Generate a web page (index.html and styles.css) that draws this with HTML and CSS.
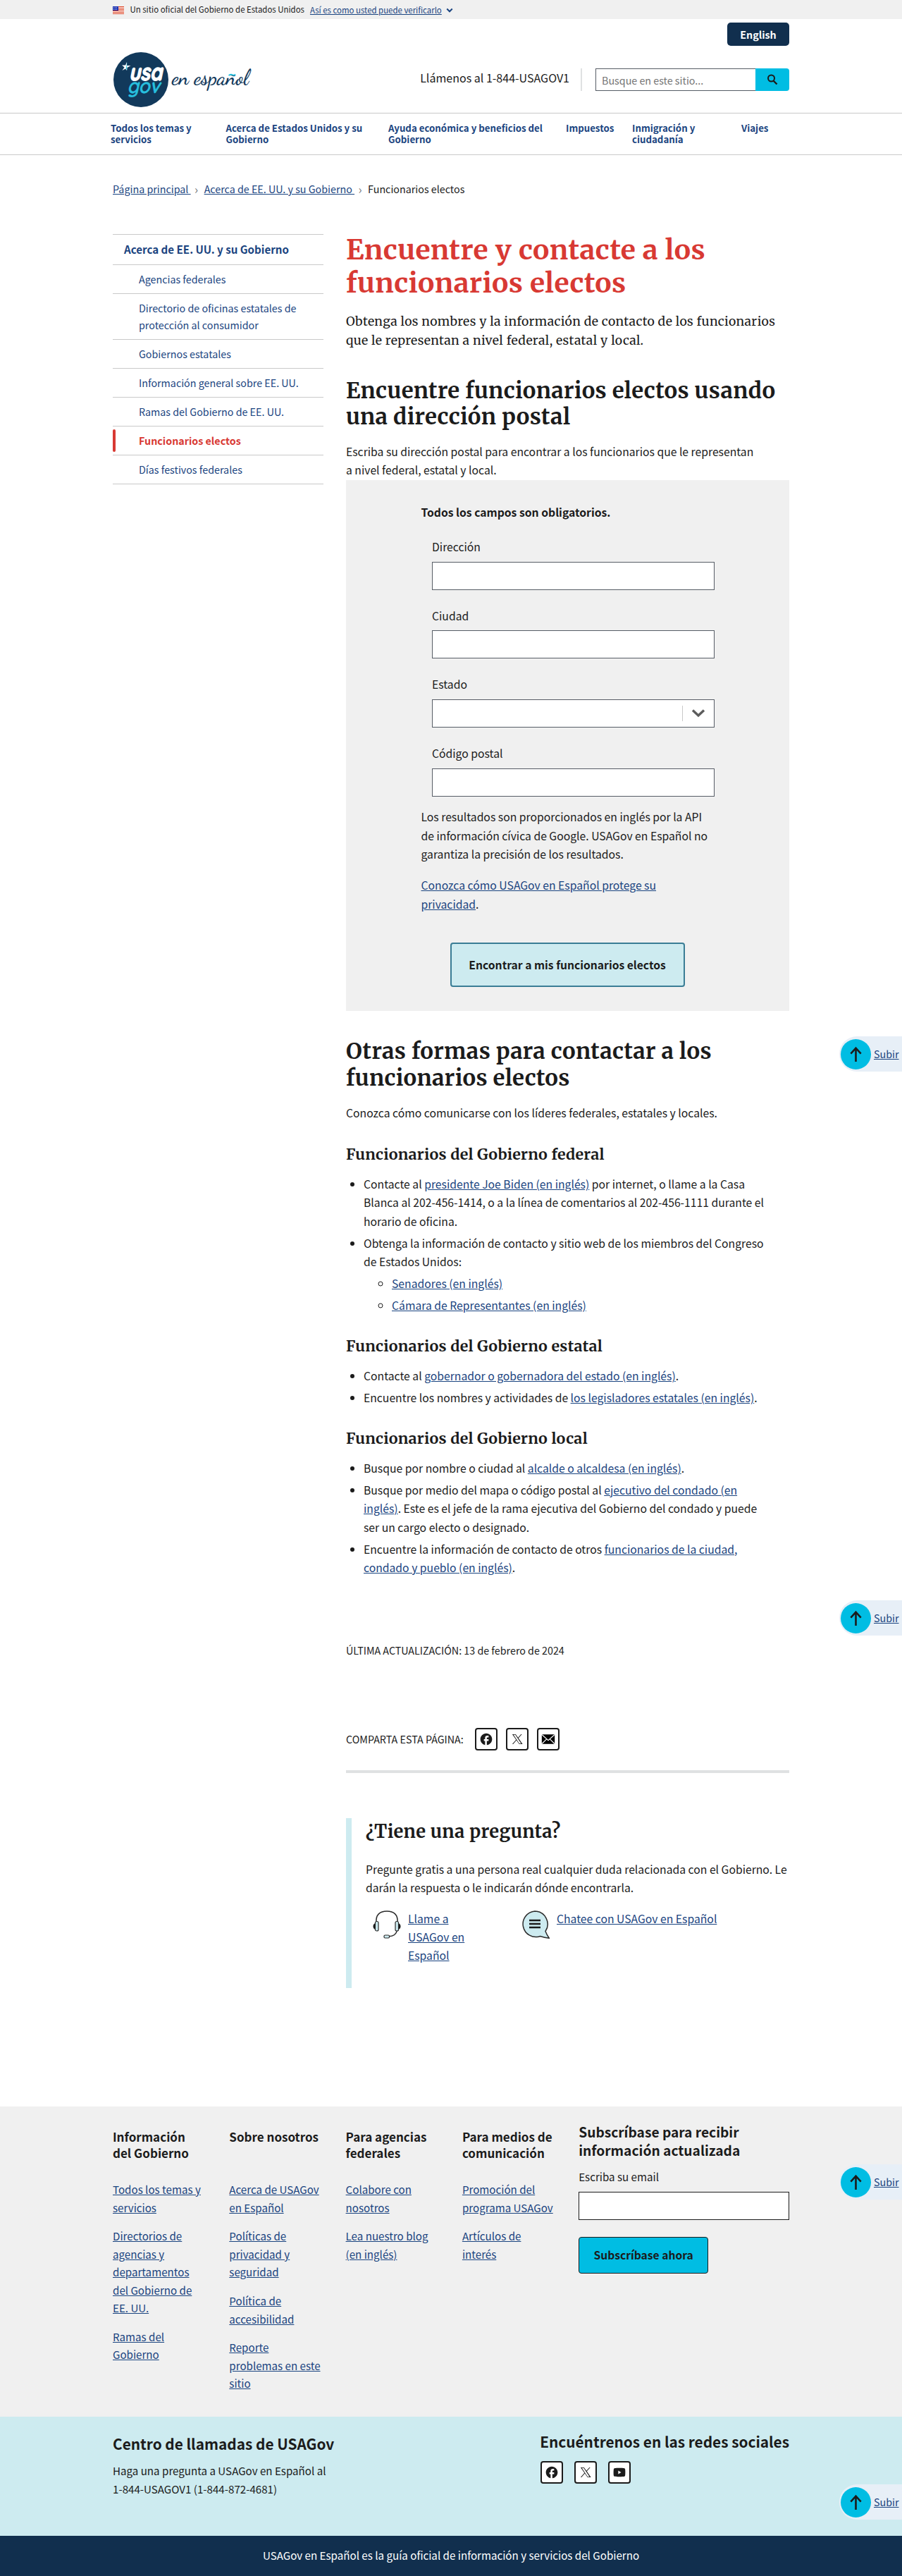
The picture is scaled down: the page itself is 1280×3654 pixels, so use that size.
FILE: index.html
```html
<!DOCTYPE html>
<html lang="es">
<head>
<meta charset="utf-8">
<title>Encuentre y contacte a los funcionarios electos | USAGov en Español</title>
<link rel="stylesheet" href="styles.css">
</head>
<body>
<svg width="0" height="0" class="sprite" aria-hidden="true">
  <symbol id="facebook" viewBox="0 0 24 24"><path fill="currentColor" d="M22 12c0-5.520-4.480-10-10-10S2 6.480 2 12c0 4.840 3.440 8.870 8 9.800V15H8v-3h2V9.500C10 7.570 11.570 6 13.500 6H16v3h-2c-.55 0-1 .45-1 1v2h3v3h-3v6.950c5.050-.5 9-4.760 9-9.950z"/></symbol>
  <symbol id="x" viewBox="0 0 24 24"><path fill="currentColor" fill-rule="evenodd" d="M3.500 3.500h5.800l4.100 5.800 5.100-5.800h1.500l-5.900 6.800 7 10.200h-5.800l-4.600-6.600-5.700 6.600H3.500l6.500-7.600zM5.600 4.600l10 14.800h3.100L8.700 4.600z"/></symbol>
  <symbol id="mail" viewBox="0 0 24 24"><rect x="1" y="4" width="22" height="16" rx="1.500" fill="#000"/><path d="M1.500 4.500L12 14l10.500-9.500M1.500 19.500l8-8M22.500 19.500l-8-8" fill="none" stroke="#fff" stroke-width="1.300"/></symbol>
  <symbol id="youtube" viewBox="0 0 24 24"><path fill="currentColor" fill-rule="evenodd" d="M12 4.500c8 0 9 .3 9.600 1.700.6 1.600.6 10 0 11.600-.6 1.400-1.600 1.700-9.600 1.700s-9-.3-9.600-1.700c-.6-1.600-.6-10 0-11.600C3 4.800 4 4.500 12 4.500zM10 9v6l5-3z"/></symbol>
  <symbol id="up" viewBox="0 0 24 24"><path d="M12 23V3M4.500 11L12 2.800 19.500 11" fill="none" stroke="#1b1b1b" stroke-width="2.700"/></symbol>
</svg>

<div class="banner"><div class="wrap">
  <svg class="flag" viewBox="0 0 16 11"><path fill="#fff" d="M0 0h16v11H0z"/><path stroke="#db3e1f" d="M0 .5h16M0 2.500h16M0 4.500h16M0 6.500h16M0 8.500h16M0 10.500h16"/><path fill="#1e33b1" d="M0 0h8v6H0z"/><path stroke="#fff" stroke-width=".7" stroke-dasharray=".8 1.200" d="M1 1.500h6M1 3h6M1 4.500h6"/></svg>
  <span>Un sitio oficial del Gobierno de Estados Unidos</span>
  <a href="#">Así es como usted puede verificarlo</a>
  <svg class="chev" viewBox="0 0 8 8"><path d="M1 2l3 3 3-3" fill="none" stroke="#1a4480" stroke-width="1.600"/></svg>
</div></div>

<header class="header wrap">
  <a class="lang" href="#">English</a>
  <div class="brand">
    <svg class="logo" viewBox="0 0 210 79">
      <circle cx="40" cy="39" r="39" fill="#12395b"/>
      <text class="logo-usa" x="23" y="40" textLength="47" lengthAdjust="spacingAndGlyphs">usa</text>
      <text class="logo-gov" x="20.500" y="58" textLength="46.500" lengthAdjust="spacingAndGlyphs">gov</text>
      <path fill="#fff" d="M13 18.500h5l2-4.500v5h5.500l-5 3-.5 4-2-2.500-4.500 2.500 3-4.500z"/><path fill="#27c0df" d="M20.200 13.500v12l-1.500-2.500 1-5z"/>
      <text class="logo-es" x="84" y="45.500" textLength="109" lengthAdjust="spacingAndGlyphs">en español</text>
      <path d="M164.500 33q3-2 5.500-.8t4-.8" fill="none" stroke="#27c0df" stroke-width="1.800"/>
    </svg>
    <div class="contact">
      <span class="phone">Llámenos al 1-844-USAGOV1</span>
      <form class="search"><input type="text" placeholder="Busque en este sitio..." aria-label="Buscar"><button type="button" aria-label="Buscar"><svg viewBox="0 0 16 16"><circle cx="6.500" cy="6" r="4.500" fill="none" stroke="#1b1b1b" stroke-width="2"/><path d="M9.500 9.500l5 5" stroke="#1b1b1b" stroke-width="2.400"/></svg></button></form>
    </div>
  </div>
</header>

<nav class="nav"><ul>
  <li>Todos los temas y servicios</li><li>Acerca de Estados Unidos y su Gobierno</li><li>Ayuda económica y beneficios del Gobierno</li><li>Impuestos</li><li>Inmigración y ciudadanía</li><li>Viajes</li>
</ul></nav>

<div class="wrap crumbs"><a href="#">Página principal&nbsp;</a><i>›</i><a href="#">Acerca de EE. UU. y su Gobierno&nbsp;</a><i>›</i><span>Funcionarios electos</span></div>

<div class="wrap layout">
  <aside class="side">
    <a class="side-head" href="#">Acerca de EE. UU. y su Gobierno</a>
    <a href="#">Agencias federales</a>
    <a href="#">Directorio de oficinas estatales de protección al consumidor</a>
    <a href="#">Gobiernos estatales</a>
    <a href="#">Información general sobre EE. UU.</a>
    <a href="#">Ramas del Gobierno de EE. UU.</a>
    <a class="current" href="#">Funcionarios electos</a>
    <a href="#">Días festivos federales</a>
  </aside>
  <main>
    <h1>Encuentre y contacte a los funcionarios electos</h1>
    <p class="intro">Obtenga los nombres y la información de contacto de los funcionarios que le representan a nivel federal, estatal y local.</p>
    <h2>Encuentre funcionarios electos usando una dirección postal</h2>
    <p class="lead">Escriba su dirección postal para encontrar a los funcionarios que le representan a nivel federal, estatal y local.</p>
    <form class="finder">
      <p class="required">Todos los campos son obligatorios.</p>
      <div class="field"><label>Dirección</label><input type="text"></div>
      <div class="field"><label>Ciudad</label><input type="text"></div>
      <div class="field"><label>Estado</label><div class="combo"><svg viewBox="0 0 20 12"><path d="M2 1.500L10 9l8-7.500" fill="none" stroke="#5c5c5c" stroke-width="3.400"/></svg></div></div>
      <div class="field"><label>Código postal</label><input type="text"></div>
      <p class="note">Los resultados son proporcionados en inglés por la API de información cívica de Google. USAGov en Español no garantiza la precisión de los resultados.</p>
      <p class="privacy"><a href="#">Conozca cómo USAGov en Español protege su privacidad</a>.</p>
      <button type="button" class="find">Encontrar a mis funcionarios electos</button>
    </form>
    <h2 class="others">Otras formas para contactar a los funcionarios electos</h2>
    <p class="others-lead">Conozca cómo comunicarse con los líderes federales, estatales y locales.</p>
    <h3 class="first">Funcionarios del Gobierno federal</h3>
    <ul class="list">
      <li>Contacte al <a href="#">presidente Joe Biden (en inglés)</a> por internet, o llame a la Casa Blanca al 202-456-1414, o a la línea de comentarios al 202-456-1111 durante el horario de oficina.</li>
      <li>Obtenga la información de contacto y sitio web de los miembros del Congreso de Estados Unidos:
        <ul><li><a href="#">Senadores (en inglés)</a></li><li><a href="#">Cámara de Representantes (en inglés)</a></li></ul></li>
    </ul>
    <h3>Funcionarios del Gobierno estatal</h3>
    <ul class="list">
      <li>Contacte al <a href="#">gobernador o gobernadora del estado (en inglés)</a>.</li>
      <li>Encuentre los nombres y actividades de <a href="#">los legisladores estatales (en inglés)</a>.</li>
    </ul>
    <h3>Funcionarios del Gobierno local</h3>
    <ul class="list">
      <li>Busque por nombre o ciudad al <a href="#">alcalde o alcaldesa (en inglés)</a>.</li>
      <li>Busque por medio del mapa o código postal al <a href="#">ejecutivo del condado (en inglés)</a>. Este es el jefe de la rama ejecutiva del Gobierno del condado y puede ser un cargo electo o designado.</li>
      <li>Encuentre la información de contacto de otros <a href="#">funcionarios de la ciudad, condado y pueblo (en inglés)</a>.</li>
    </ul>
    <p class="updated">ÚLTIMA ACTUALIZACIÓN: 13 de febrero de 2024</p>
    <div class="share"><span>COMPARTA ESTA PÁGINA:</span>
      <a class="social" href="#"><svg><use href="#facebook"/></svg></a><a class="social" href="#"><svg><use href="#x"/></svg></a><a class="social" href="#"><svg><use href="#mail"/></svg></a>
    </div>
    <section class="ask">
      <h2>¿Tiene una pregunta?</h2>
      <p>Pregunte gratis a una persona real cualquier duda relacionada con el Gobierno. Le darán la respuesta o le indicarán dónde encontrarla.</p>
      <div class="ways">
        <svg viewBox="0 0 40 40"><path d="M5 17C4 6 10 1 20 1s16 5 15 16M34.500 28c-1 6-6 8.500-12 8.800" fill="none" stroke="#2b2b2b" stroke-width="1.500"/><path d="M3.500 18C-.5 19-.5 26 3.500 27zM36.500 18c4 1 4 8 0 9z" fill="#1b1b1b"/><g fill="#cdebf0" stroke="#2b2b2b" stroke-width="1.200"><rect x="3.500" y="15.500" width="4.500" height="13.500" rx="2"/><rect x="32" y="15.500" width="4.500" height="13.500" rx="2"/><rect x="16" y="35" width="7.500" height="4" rx="1.500"/></g></svg>
        <a href="#">Llame a USAGov en Español</a>
        <svg viewBox="0 0 40 40"><path d="M19 1a18.300 18.300 0 1 0 7.500 35.500Q33 38.500 39.300 39.200 36 34.500 34 29.500A18.300 18.300 0 0 0 19 1z" fill="#cdebf0" stroke="#2b2b2b" stroke-width="1.500"/><path d="M11 14h16M11 19h16M11 24h16" stroke="#1b1b1b" stroke-width="2.400"/></svg>
        <a href="#">Chatee con USAGov en Español</a>
      </div>
    </section>
  </main>
</div>

<footer>
  <div class="foot"><div class="wrap foot-grid">
    <section><h3>Información del&nbsp;Gobierno</h3><a href="#">Todos los temas y servicios</a><a href="#">Directorios de agencias y departamentos del Gobierno de EE. UU.</a><a href="#">Ramas del Gobierno</a></section>
    <section><h3>Sobre nosotros</h3><a href="#">Acerca de USAGov en Español</a><a href="#">Políticas de privacidad y seguridad</a><a href="#">Política de accesibilidad</a><a href="#">Reporte problemas en este sitio</a></section>
    <section><h3>Para agencias federales</h3><a href="#">Colabore con nosotros</a><a href="#">Lea nuestro blog (en inglés)</a></section>
    <section><h3>Para medios de comunicación</h3><a href="#">Promoción del programa USAGov</a><a href="#">Artículos de interés</a></section>
    <form class="signup"><h3>Subscríbase para recibir información actualizada</h3><label>Escriba su email</label><input type="text"><button type="button">Subscríbase ahora</button></form>
  </div></div>
  <div class="center"><div class="wrap center-row">
    <div class="call"><h3>Centro de llamadas de USAGov</h3><p>Haga una pregunta a USAGov en Español al<br>1-844-USAGOV1 (1-844-872-4681)</p></div>
    <div class="follow"><h3>Encuéntrenos en las redes sociales</h3><div class="socials"><a class="social" href="#"><svg><use href="#facebook"/></svg></a><a class="social" href="#"><svg><use href="#x"/></svg></a><a class="social" href="#"><svg><use href="#youtube"/></svg></a></div></div>
  </div></div>
  <div class="tagline">USAGov en Español es la guía oficial de información y servicios del Gobierno</div>
</footer>

<a class="top top-1" href="#"><b><svg><use href="#up"/></svg></b><span>Subir</span></a>
<a class="top top-2" href="#"><b><svg><use href="#up"/></svg></b><span>Subir</span></a>
<a class="top top-3" href="#"><b><svg><use href="#up"/></svg></b><span>Subir</span></a>
<a class="top top-4" href="#"><b><svg><use href="#up"/></svg></b><span>Subir</span></a>
</body>
</html>
```
FILE: styles.css
```css
* { box-sizing: border-box; }
body { margin: 0; background: #fff; color: #1b1b1b; font: 15.73px/26.4px "Noto Sans CJK JP", "Noto Sans", sans-serif; position: relative; overflow-x: hidden; }
h1, h2, h3, p, ul { margin: 0; padding: 0; }
a { color: #1a4480; }
input { display: block; margin: 0; border: 1px solid #565c65; border-radius: 0; background: #fff; font: inherit; }
.sprite { position: absolute; }
.wrap { width: 960px; margin: 0 auto; }

.banner { background: #f0f0f0; height: 27px; font-size: 11.43px; line-height: 16px; }
.banner .wrap { display: flex; align-items: center; height: 26px; }
.flag { width: 16px; height: 11px; margin: 2px 8.5px 0 0; }
.banner a { margin: 2px 6px 0 8px; }
.chev { width: 10px; height: 10px; margin-top: 4px; }

.header { height: 133px; padding-top: 5px; display: flex; flex-direction: column; }
.lang { align-self: flex-end; width: 88px; height: 33px; border-radius: 5px; background: #112f4e; color: #fff; font-weight: 700; font-size: 14.3px; line-height: 33px; text-align: center; text-decoration: none; }
.brand { flex: 1; display: flex; align-items: center; justify-content: space-between; padding-top: 1px; }
.logo { width: 210px; height: 79px; }
.logo-usa { font: italic 700 33px "Quicksand", "Inter", sans-serif; fill: #fff; stroke: #fff; stroke-width: 1.4px; }
.logo-gov { font: italic 600 29px "Quicksand", "Inter", sans-serif; fill: #27c0df; stroke: #27c0df; stroke-width: .4px; }
.logo-es { font: 600 30px "Dancing Script", cursive; fill: #12395b; }
.contact { display: flex; align-items: center; }
.phone { font-size: 16.04px; padding-right: 16px; margin-right: 19px; border-right: 2px solid #dfe1e2; line-height: 27.5px; height: 32px; }
.search { display: flex; }
.search input { width: 227px; height: 32px; border-right: 0; padding: 0 8px; font-size: 14.3px; }
.search input::placeholder { color: #757575; }
.search button { width: 48px; height: 32px; border: 0; border-radius: 0 4px 4px 0; background: #00bde3; padding: 0; display: grid; place-items: center; }
.search svg { width: 16px; height: 16px; }

.nav { height: 60px; border: 1px solid #c9c9c9; border-width: 1px 0; }
.nav ul { list-style: none; display: grid; grid-template-columns: 163.5px 230.5px 252px 94px 155px 100px; padding: 13px 0 0 157px; font-weight: 700; font-size: 13.28px; line-height: 16px; color: #1a4480; }
.nav li { padding-right: 20px; }
.nav li:nth-child(4) { padding-right: 0; }
.nav li:nth-child(5) { padding-right: 50px; }

.crumbs { display: flex; font-size: 14.3px; line-height: 24px; padding-top: 36px; }
.crumbs i { font-style: normal; font-size: 17px; color: #71767a; width: 19px; padding-right: 3px; text-align: center; }

.layout { display: grid; grid-template-columns: 299px 629px; column-gap: 32px; margin-top: 52px; }
.side { display: flex; flex-direction: column; align-self: start; border-bottom: 1px solid #c9c9c9; }
.side a { border-top: 1px solid #c9c9c9; padding: 8px 25px 8px 37px; font-size: 14.3px; line-height: 24px; text-decoration: none; position: relative; }
.side .side-head { font-weight: 700; font-size: 15.13px; padding: 8px 16px 9px; line-height: 25px; }
.side .current { color: #d83933; font-weight: 700; }
.side .current::before { content: ""; position: absolute; left: 0; top: 4px; bottom: 4px; width: 4px; border-radius: 4px; background: #d83933; }

h1, h2, main h3, .intro { font-family: Merriweather, "DejaVu Serif Condensed", serif; }
h1 { color: #d83933; font-size: 39.04px; line-height: 46.8px; letter-spacing: .42px; }
.intro { font-size: 17.6px; line-height: 27px; letter-spacing: .34px; margin-top: 17px; max-width: 620px; }
h2 { font-size: 31.2px; line-height: 37.5px; letter-spacing: .34px; margin-top: 39px; }
.lead { margin-top: 17px; max-width: 585px; }
.finder { background: #f0f0f0; height: 753px; padding: 33px 103px 0 106.5px; margin-top: .6px; }
.required { font-weight: 700; }
.field { margin: 24.07px 0 0 15.5px; width: 401px; }
.required + .field { margin-top: 22.7px; }
.field label { display: block; margin-bottom: 7.2px; }
.field input { width: 401px; height: 40px; }
.combo { height: 40px; background: #fff; border: 1px solid #565c65; display: flex; justify-content: flex-end; align-items: center; }
.combo svg { width: 45px; height: 22px; padding: 5px 12px; border-left: 1px solid #c9c9c9; }
.note { margin-top: 16.5px; }
.privacy { margin-top: 18px; max-width: 360px; }
.find { display: block; width: 333px; height: 63px; margin: 41px auto 0 41px; border: 2px solid #3a7d95; border-radius: 4px; background: #cdebf0; color: #1b1b1b; font: 700 15.67px/20px "Noto Sans CJK JP", "Noto Sans", sans-serif; padding: 0; }
.others-lead { margin-top: 18px; }
main h3 { font-size: 21.44px; line-height: 26px; letter-spacing: .25px; margin-top: 32px; }
main .first { margin-top: 32.5px; }
.list { padding-left: 25px; margin-top: 16px; max-width: 597px; }
.list li { margin-bottom: 4.4px; }
.list ul { padding-left: 40px; margin-top: 4.4px; }
.updated { font-size: 14.29px; margin-top: 91px; }
.share { display: flex; align-items: center; font-size: 14.3px; margin-top: 96px; padding-bottom: 28px; border-bottom: 4px solid #dfe1e2; }
.share span { margin-right: 4px; }
.social { width: 32px; height: 32px; border: 2px solid #1b1b1b; border-radius: 4px; background: #fff; color: #1b1b1b; display: grid; place-items: center; }
.share .social { margin-left: 12px; }
.social svg { width: 20px; height: 20px; }
.ask { margin-top: 64px; border-left: 8px solid #cdebf0; height: 241px; padding: 1px 0 0 20px; }
.ask h2 { font-size: 25.5px; line-height: 37px; margin: 0; }
.ask p { margin-top: 22px; }
.ways { display: grid; grid-template-columns: 50px 161px 50px 240px; padding-left: 10px; margin-top: 17px; align-items: start; }
.ways svg { width: 40px; height: 40px; margin-top: 1px; }
.ways a { max-width: 90px; }
.ways a:last-child { max-width: none; }

.foot { background: #f0f0f0; height: 440px; margin-top: 168px; }
.foot-grid { display: grid; grid-template-columns: 132px 132px 132px 132px 299px; column-gap: 33.3px; padding-top: 29px; font-size: 15.13px; line-height: 25.4px; }
.foot section { display: flex; flex-direction: column; align-items: flex-start; }
.foot section h3 { font-size: 17.03px; line-height: 23px; height: 46px; margin: 2px 0 28.4px; }
.foot section a { margin-bottom: 15.5px; }
.signup h3 { font-size: 19.2px; line-height: 26px; margin-top: -6px; }
.signup label { display: block; margin: 12px 0 8.7px; }
.signup input { width: 299px; height: 40px; border-color: #1b1b1b; }
.signup button { width: 184px; height: 52px; margin-top: 24px; border: 1px solid #1b1b1b; border-radius: 4px; background: #00bde3; color: #1b1b1b; font: 700 15.65px/20px "Noto Sans CJK JP", "Noto Sans", sans-serif; padding: 0; }
.center { background: #cdebf0; height: 169px; }
.center-row { display: flex; justify-content: space-between; }
.center h3 { font-size: 20.8px; line-height: 28px; }
.call { padding-top: 24px; }
.call p { font-size: 15.13px; line-height: 25.4px; margin-top: 12.7px; }
.follow { padding-top: 21.6px; }
.socials { display: flex; gap: 16px; margin-top: 13.4px; padding-left: 1px; }
.tagline { background: #112f4e; color: #fff; height: 57px; line-height: 55px; text-align: center; font-size: 15.15px; }

.top { position: absolute; right: 0; width: 89px; height: 50px; border-radius: 25px 0 0 25px; background: #e7eff7; display: flex; align-items: center; padding-left: 2px; font-size: 14.3px; }
.top b { width: 43px; height: 43px; border-radius: 50%; background: #00bde3; display: grid; place-items: center; margin-right: 4px; }
.top svg { width: 23px; height: 23px; }
.top-1 { top: 1470px; }
.top-2 { top: 2270px; }
.top-3 { top: 3070px; }
.top-4 { top: 3524px; }
```
